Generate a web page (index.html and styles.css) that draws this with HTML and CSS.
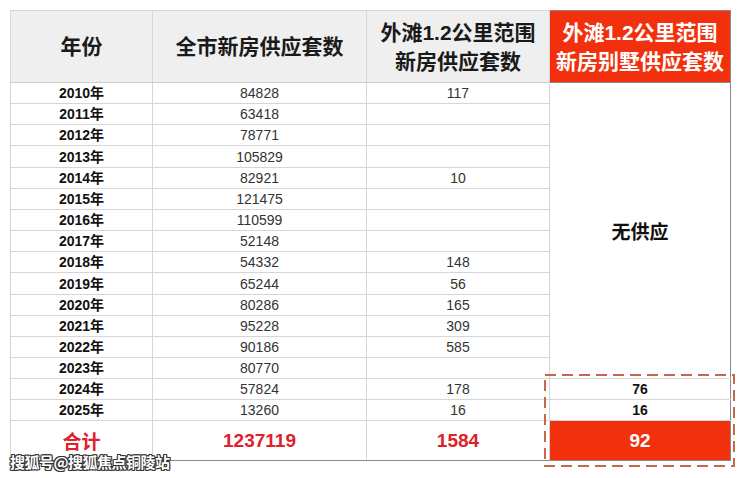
FILE: index.html
```html
<!DOCTYPE html>
<html lang="zh">
<head>
<meta charset="utf-8">
<link rel="stylesheet" href="styles.css">
</head>
<body>
<div class="page">
  <table class="supply">
    <colgroup>
      <col class="c1"><col class="c2"><col class="c3"><col class="c4">
    </colgroup>
    <thead>
      <tr class="head">
        <th>年份</th>
        <th>全市新房供应套数</th>
        <th>外滩1.2公里范围<br>新房供应套数</th>
        <th class="hot">外滩1.2公里范围<br>新房别墅供应套数</th>
      </tr>
    </thead>
    <tbody>
      <tr><td class="yr">2010年</td><td>84828</td><td>117</td><td class="none" rowspan="14">无供应</td></tr>
      <tr><td class="yr">2011年</td><td>63418</td><td></td></tr>
      <tr><td class="yr">2012年</td><td>78771</td><td></td></tr>
      <tr class="tall"><td class="yr">2013年</td><td>105829</td><td></td></tr>
      <tr><td class="yr">2014年</td><td>82921</td><td>10</td></tr>
      <tr><td class="yr">2015年</td><td>121475</td><td></td></tr>
      <tr><td class="yr">2016年</td><td>110599</td><td></td></tr>
      <tr><td class="yr">2017年</td><td>52148</td><td></td></tr>
      <tr><td class="yr">2018年</td><td>54332</td><td>148</td></tr>
      <tr class="tall"><td class="yr">2019年</td><td>65244</td><td>56</td></tr>
      <tr><td class="yr">2020年</td><td>80286</td><td>165</td></tr>
      <tr><td class="yr">2021年</td><td>95228</td><td>309</td></tr>
      <tr><td class="yr">2022年</td><td>90186</td><td>585</td></tr>
      <tr><td class="yr">2023年</td><td>80770</td><td></td></tr>
      <tr><td class="yr">2024年</td><td>57824</td><td>178</td><td class="em">76</td></tr>
      <tr><td class="yr">2025年</td><td>13260</td><td>16</td><td class="em">16</td></tr>
      <tr class="total"><td>合计</td><td>1237119</td><td>1584</td><td class="hot">92</td></tr>
    </tbody>
  </table>
  <svg class="dash" width="192" height="94" viewBox="0 0 192 94">
    <rect x="1" y="1" width="189" height="91" fill="none" stroke="#c4684b" stroke-width="2" stroke-dasharray="11 6"/>
  </svg>
  <div class="mark">搜狐号@搜狐焦点铜陵站</div>
</div>
</body>
</html>
```

FILE: styles.css
```css
* { box-sizing: border-box; }
html, body { margin: 0; padding: 0; background: #fff; }
body {
  width: 740px;
  height: 478px;
  overflow: hidden;
  font-family: "Liberation Sans", "Noto Sans CJK SC", sans-serif;
}
.page {
  position: relative;
  padding: 10px 0 0 10px;
}
.supply {
  border-collapse: collapse;
  table-layout: fixed;
  width: 720px;
  border: 1px solid #8a8a8a;
}
.c1 { width: 142px; }
.c2 { width: 214px; }
.c3 { width: 183px; }
.c4 { width: 181px; }
.supply th, .supply td {
  border: 1px solid #d6d6d6;
  padding: 0;
  text-align: center;
  vertical-align: middle;
}
.head { height: 72px; }
.head th {
  background: #efefef;
  font-family: "Liberation Sans", "Noto Sans CJK SC", sans-serif;
  font-size: 21px;
  font-weight: 700;
  line-height: 29px;
  color: #1a1a1a;
  border-bottom-color: #cfcfcf;
}
.head th.hot {
  background: #f2300e;
  color: #fff;
  border-color: #8a8a8a;
}
tbody tr { height: 21px; }
tbody tr.tall { height: 22px; }
tbody td {
  font-size: 14px;
  line-height: 16px;
  color: #333;
}
tbody td.yr {
  font-weight: 700;
  color: #111;
}
td.none {
  font-family: "Noto Sans CJK SC", sans-serif;
  font-size: 19px;
  font-weight: 700;
  color: #111;
  background: #fff;
  border-right-color: #8a8a8a;
}
td.em {
  font-weight: 700;
  color: #111;
  border-right-color: #8a8a8a;
}
tr.total { height: 40px; }
tr.total td {
  font-size: 19px;
  font-weight: 700;
  color: #e0202a;
  border-bottom-color: #8a8a8a;
}
tr.total td:first-child {
  font-family: "Noto Sans CJK SC", sans-serif;
  font-size: 19px;
}
tr.total td.hot {
  background: #f2300e;
  color: #fff;
  border-color: #8a8a8a;
}
.dash {
  position: absolute;
  left: 544px;
  top: 374px;
}
.mark {
  position: absolute;
  left: 10px;
  top: 452px;
  font-family: "Noto Sans CJK SC", sans-serif;
  font-size: 15px;
  line-height: 20px;
  font-weight: 700;
  color: #fff;
  letter-spacing: -0.5px;
  text-shadow: -1px 0 #333, 1px 0 #333, 0 -1px #333, 0 1px #333,
               -1px -1px #333, 1px 1px #333, -1px 1px #333, 1px -1px #333;
}
```
